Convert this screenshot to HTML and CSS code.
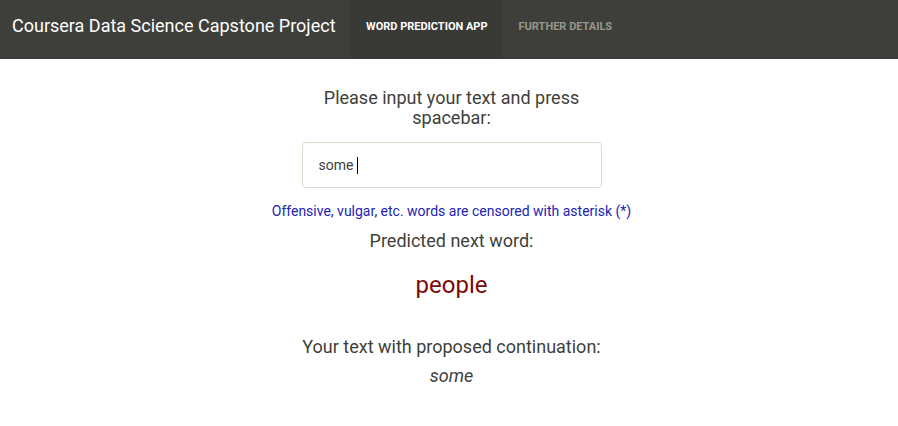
FILE: index.html
```html
<!DOCTYPE html>
<html>
<head>
<meta charset="utf-8">
<link rel="stylesheet" href="styles.css">
</head>
<body>
<nav class="navbar">
  <div class="brand">Coursera Data Science Capstone Project</div>
  <ul class="nav">
    <li class="nav-item active">Word Prediction App</li>
    <li class="nav-item">Further Details</li>
  </ul>
</nav>
<main class="content">
  <h4 class="prompt">Please input your text and press spacebar:</h4>
  <div class="input-box"><span class="input-text">some&nbsp;</span><span class="caret"></span></div>
  <p class="notice">Offensive, vulgar, etc. words are censored with asterisk (*)</p>
  <h4 class="label label-predicted">Predicted next word:</h4>
  <div class="prediction">people</div>
  <h4 class="label label-continuation">Your text with proposed continuation:</h4>
  <div class="continuation">some</div>
</main>
</body>
</html>
```

FILE: styles.css
```css
html, body {
  margin: 0;
  padding: 0;
  background: #ffffff;
  font-family: Roboto, "Noto Sans", sans-serif;
  color: #3e3f3a;
}

.navbar {
  display: flex;
  align-items: stretch;
  height: 59px;
  background: #3e3f3a;
}

.brand {
  display: flex;
  align-items: center;
  padding: 0 15px 9px 12px;
  width: 323px;
  font-size: 18px;
  color: #ffffff;
  white-space: nowrap;
}

.nav {
  display: flex;
  margin: 0;
  padding: 0;
  list-style: none;
}

.nav-item {
  display: flex;
  align-items: center;
  padding: 0 15px 7px 16px;
  font-size: 11px;
  font-weight: 700;
  text-transform: uppercase;
  color: #98978b;
  white-space: nowrap;
}

.nav-item.active {
  background: #393a35;
  color: #ffffff;
}

.content {
  display: flex;
  flex-direction: column;
  align-items: center;
  padding-left: 5px;
}

.prompt {
  width: 300px;
  margin: 29px 0 0;
  font-size: 18px;
  font-weight: 400;
  line-height: 20px;
  text-align: center;
}

.input-box {
  box-sizing: border-box;
  display: flex;
  align-items: center;
  width: 300px;
  height: 46px;
  margin-top: 14px;
  padding: 0 16px;
  border: 1px solid #dfd7ca;
  border-radius: 4px;
  font-size: 14px;
  color: #3e3f3a;
}

.caret {
  display: inline-block;
  width: 1px;
  height: 17px;
  background: #000000;
}

.notice {
  margin: 13px 0 0;
  font-size: 14px;
  line-height: 20px;
  color: #2323b4;
}

.label {
  margin: 10px 0 0;
  font-size: 18px;
  font-weight: 400;
  line-height: 20px;
}

.prediction {
  margin-top: 21px;
  font-size: 24px;
  line-height: 26px;
  color: #7c0a0a;
}

.label-continuation {
  margin-top: 39px;
}

.continuation {
  margin-top: 9px;
  font-size: 18px;
  line-height: 20px;
  font-style: italic;
}
```
